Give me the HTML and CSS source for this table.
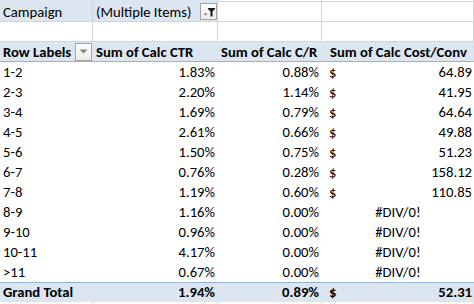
FILE: index.html
```html
<!DOCTYPE html>
<html>
<head>
<meta charset="utf-8">
<link rel="stylesheet" href="styles.css">
</head>
<body>
<div class="sheet">
  <div class="c strip fill gl-r"></div>
  <div class="c strip fill gl-r"></div>
  <div class="c strip gl-r gl-b"></div>
  <div class="c strip gl-r gl-b"></div>

  <div class="c fill gl-r gl-b">Campaign</div>
  <div class="c fill gl-r gl-b filter-cell"><span>(Multiple Items)</span>
    <span class="btn">
      <svg width="14" height="14" viewBox="0 0 14 14">
        <path d="M1.5 8.5 h4 l-2 2 z" fill="#6d6d6d"/>
        <path d="M6 3 h7 v1 l-2.5 2.5 v5 h-2 v-5 L6 4 z" fill="#1a1a1a"/>
      </svg>
    </span>
  </div>
  <div class="c gl-r gl-b"></div>
  <div class="c gl-r gl-b"></div>

  <div class="c gl-r gl-b"></div>
  <div class="c gl-r gl-b"></div>
  <div class="c gl-r gl-b"></div>
  <div class="c gl-r gl-b"></div>

  <div class="c hd dd-cell"><span>Row Labels</span>
    <span class="btn dd">
      <svg width="9" height="5" viewBox="0 0 9 5"><path d="M0.5 0.5 h8 l-4 4 z" fill="#808080"/></svg>
    </span>
  </div>
  <div class="c hd">Sum of Calc CTR</div>
  <div class="c hd">Sum of Calc C/R</div>
  <div class="c hd cost-hd">Sum of Calc Cost/Conv</div>

  <div class="c">1-2</div><div class="c num">1.83%</div><div class="c num">0.88%</div><div class="c cur"><span>$</span><span>64.89</span></div>
  <div class="c">2-3</div><div class="c num">2.20%</div><div class="c num">1.14%</div><div class="c cur"><span>$</span><span>41.95</span></div>
  <div class="c">3-4</div><div class="c num">1.69%</div><div class="c num">0.79%</div><div class="c cur"><span>$</span><span>64.64</span></div>
  <div class="c">4-5</div><div class="c num">2.61%</div><div class="c num">0.66%</div><div class="c cur"><span>$</span><span>49.88</span></div>
  <div class="c">5-6</div><div class="c num">1.50%</div><div class="c num">0.75%</div><div class="c cur"><span>$</span><span>51.23</span></div>
  <div class="c">6-7</div><div class="c num">0.76%</div><div class="c num">0.28%</div><div class="c cur"><span>$</span><span>158.12</span></div>
  <div class="c">7-8</div><div class="c num">1.19%</div><div class="c num">0.60%</div><div class="c cur"><span>$</span><span>110.85</span></div>
  <div class="c">8-9</div><div class="c num">1.16%</div><div class="c num">0.00%</div><div class="c err">#DIV/0!</div>
  <div class="c">9-10</div><div class="c num">0.96%</div><div class="c num">0.00%</div><div class="c err">#DIV/0!</div>
  <div class="c">10-11</div><div class="c num">4.17%</div><div class="c num">0.00%</div><div class="c err">#DIV/0!</div>
  <div class="c">&gt;11</div><div class="c num">0.67%</div><div class="c num">0.00%</div><div class="c err">#DIV/0!</div>

  <div class="c tot">Grand Total</div><div class="c tot num">1.94%</div><div class="c tot num">0.89%</div><div class="c tot cur"><span>$</span><span>52.31</span></div>

  <div class="c gl-r"></div>
  <div class="c gl-r"></div>
  <div class="c gl-r"></div>
  <div class="c gl-r"></div>
</div>
</body>
</html>
```

FILE: styles.css
```css
html, body {
  margin: 0;
  padding: 0;
  background: #ffffff;
}

.sheet {
  display: grid;
  grid-template-columns: 93px 125px 104px 152px;
  grid-template-rows: 2px repeat(14, 20px) 20px 2px;
  font-family: Carlito, Calibri, Lato, "Liberation Sans", sans-serif;
  font-size: 14.67px;
  color: #000000;
  line-height: 20px;
}

.c {
  box-sizing: border-box;
  padding: 0 3px;
  white-space: nowrap;
  overflow: hidden;
}

.strip {
  padding: 0;
}

.fill {
  background: #dce6f1;
}

.gl-r {
  border-right: 1px solid #d4d4d4;
}

.gl-b {
  border-bottom: 1px solid #d4d4d4;
}

.filter-cell,
.dd-cell {
  display: flex;
  align-items: center;
  justify-content: space-between;
  padding-right: 0;
}

.btn {
  box-sizing: border-box;
  display: flex;
  align-items: center;
  justify-content: center;
  width: 17px;
  height: 17px;
  border: 1px solid #a5a5a5;
  background: linear-gradient(#ffffff, #ebebeb);
}

.dd {
  width: 17px;
  height: 18px;
  margin-right: 1px;
}

.hd {
  background: #dce6f1;
  border-bottom: 1px solid #95b3d7;
  font-weight: bold;
}

.cost-hd {
  padding-left: 8px;
}

.num {
  text-align: right;
}

.cur {
  display: flex;
  justify-content: space-between;
  padding-left: 7px;
  padding-right: 2px;
}

.err {
  text-align: center;
}

.tot {
  background: #dce6f1;
  border-top: 1px solid #95b3d7;
  font-weight: bold;
  line-height: 19px;
}
```
